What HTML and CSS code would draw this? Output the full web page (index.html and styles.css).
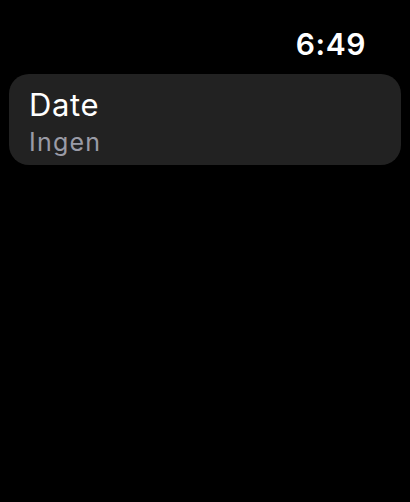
FILE: index.html
```html
<!DOCTYPE html>
<html>
<head>
<meta charset="utf-8">
<link rel="stylesheet" href="styles.css">
</head>
<body>
<div class="screen">
  <div class="status">
    <span class="time">6:49</span>
  </div>
  <div class="card">
    <div class="title">Date</div>
    <div class="value">Ingen</div>
  </div>
</div>
</body>
</html>
```
FILE: styles.css
```css
html, body {
  margin: 0;
  padding: 0;
  background: #000;
}
body {
  width: 410px;
  height: 502px;
  overflow: hidden;
  font-family: Inter, "Noto Sans", sans-serif;
  color: #fff;
}
.screen {
  display: flex;
  flex-direction: column;
  padding: 0 9px;
}
.status {
  display: flex;
  justify-content: flex-end;
  height: 74px;
  box-sizing: border-box;
  padding-top: 26px;
  padding-right: 35px;
}
.time {
  font-size: 30px;
  font-weight: 600;
  line-height: 36px;
  letter-spacing: 0.6px;
}
.card {
  background: #222222;
  border-radius: 20px;
  height: 91px;
  box-sizing: border-box;
  padding: 13px 0 0 20px;
  display: flex;
  flex-direction: column;
}
.title {
  font-size: 31px;
  line-height: 36px;
  font-weight: 400;
  letter-spacing: 0.6px;
  color: #fff;
}
.value {
  font-size: 25px;
  line-height: 32px;
  margin-top: 3px;
  color: #9a9ba6;
  letter-spacing: 1.2px;
}
```
